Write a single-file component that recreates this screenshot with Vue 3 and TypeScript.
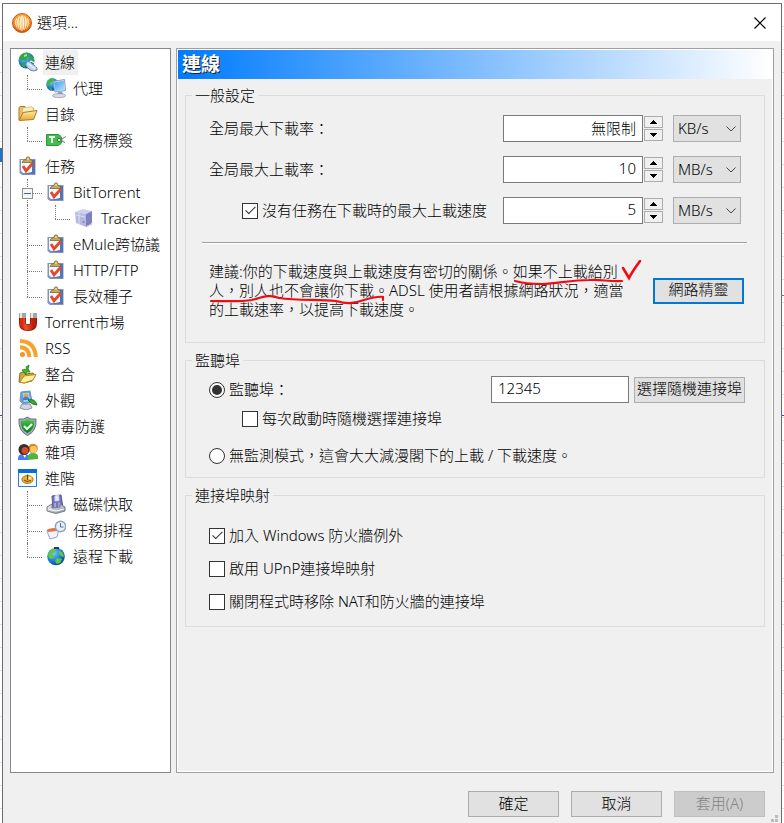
<script setup lang="ts">
import { reactive, ref } from 'vue'

type Guide = 'tee' | 'elbow' | 'pipe' | 'box'
interface TreeItem {
  label: string
  icon: string
  guides: Guide[]
}
interface Rate {
  id: string
  label: string
  value: string
  unit: string
  optional: boolean
}

const items: TreeItem[] = [
  { label: '連線', icon: 'globe-link', guides: [] },
  { label: '代理', icon: 'monitor', guides: ['elbow'] },
  { label: '目錄', icon: 'folder', guides: [] },
  { label: '任務標簽', icon: 'tag', guides: ['elbow'] },
  { label: '任務', icon: 'task', guides: [] },
  { label: 'BitTorrent', icon: 'task', guides: ['box'] },
  { label: 'Tracker', icon: 'server', guides: ['pipe', 'elbow'] },
  { label: 'eMule跨協議', icon: 'task', guides: ['tee'] },
  { label: 'HTTP/FTP', icon: 'task', guides: ['tee'] },
  { label: '長效種子', icon: 'task', guides: ['elbow'] },
  { label: 'Torrent市場', icon: 'magnet', guides: [] },
  { label: 'RSS', icon: 'rss', guides: [] },
  { label: '整合', icon: 'integrate', guides: [] },
  { label: '外觀', icon: 'look', guides: [] },
  { label: '病毒防護', icon: 'shield', guides: [] },
  { label: '雜項', icon: 'people', guides: [] },
  { label: '進階', icon: 'advanced', guides: [] },
  { label: '磁碟快取', icon: 'disk', guides: ['tee'] },
  { label: '任務排程', icon: 'schedule', guides: ['tee'] },
  { label: '遠程下載', icon: 'globe', guides: ['elbow'] },
]

const selected = ref('連線')
const rates = reactive<Rate[]>([
  { id: 'down', label: '全局最大下載率：', value: '無限制', unit: 'KB/s', optional: false },
  { id: 'up', label: '全局最大上載率：', value: '10', unit: 'MB/s', optional: false },
  { id: 'idle', label: '沒有任務在下載時的最大上載速度', value: '5', unit: 'MB/s', optional: true },
])
const limitIdle = ref(true)
const mode = ref('listen')
const port = ref('12345')
const randomEachStart = ref(false)
const mappings = reactive([
  { id: 'fw', label: '加入 Windows 防火牆例外', on: true },
  { id: 'upnp', label: '啟用 UPnP連接埠映射', on: false },
  { id: 'nat', label: '關閉程式時移除 NAT和防火牆的連接埠', on: false },
])

function step(rate: Rate, delta: number) {
  const next = (parseInt(rate.value, 10) || 0) + delta
  rate.value = next > 0 ? String(next) : '無限制'
}
function randomPort() {
  port.value = String(10000 + Math.floor(Math.random() * 50000))
}
</script>

<template>
  <div class="desk">
    <section class="window">
      <header class="titlebar">
        <svg class="logo" viewBox="0 0 20 20" aria-hidden="true"><use href="#i-logo" /></svg>
        <h1>選項...</h1>
        <button class="close" type="button" aria-label="關閉">
          <svg viewBox="0 0 12 12"><path d="M.5 .5 11.5 11.5M11.5 .5 .5 11.5" stroke="#000" stroke-width="1.2" /></svg>
        </button>
      </header>

      <div class="body">
        <nav class="tree">
          <button
            v-for="item in items"
            :key="item.label"
            type="button"
            class="node"
            :class="{ current: item.label === selected }"
            @click="selected = item.label"
          >
            <span v-for="(guide, i) in item.guides" :key="i" class="guide" :class="guide"></span>
            <svg class="icon" viewBox="0 0 20 20" aria-hidden="true"><use :href="'#i-' + item.icon" /></svg>
            <span class="name">{{ item.label }}</span>
          </button>
        </nav>

        <main class="panel">
          <h2>連線</h2>
          <div class="groups">
            <fieldset>
              <legend>一般設定</legend>
              <div class="rates">
                <div v-for="rate in rates" :key="rate.id" class="rate">
                  <label v-if="rate.optional" class="option nested">
                    <input v-model="limitIdle" type="checkbox" />{{ rate.label }}
                  </label>
                  <label v-else :for="rate.id">{{ rate.label }}</label>
                  <input :id="rate.id" v-model="rate.value" class="field number" type="text" :aria-label="rate.label" />
                  <span class="spin">
                    <button type="button" aria-label="增加" @click="step(rate, 1)">
                      <svg viewBox="0 0 7 4"><path d="M3 0h1v1h1v1h1v1h1v1H0V3h1V2h1V1h1z" /></svg>
                    </button>
                    <button type="button" aria-label="減少" @click="step(rate, -1)">
                      <svg viewBox="0 0 7 4"><path d="M0 0h7v1H6v1H5v1H4v1H3V3H2V2H1V1H0z" /></svg>
                    </button>
                  </span>
                  <span class="unit">
                    <select v-model="rate.unit" :aria-label="rate.label">
                      <option>KB/s</option>
                      <option>MB/s</option>
                    </select>
                    <svg viewBox="0 0 10 6" aria-hidden="true"><path d="M.5 .5 5 5 9.5 .5" fill="none" stroke="#444" /></svg>
                  </span>
                </div>
              </div>
              <hr />
              <div class="advice">
                <div class="note">
                  <p>
                    建議:你的下載速度與上載速度有密切的關係。如果不上載給別<br />
                    人，別人也不會讓你下載。ADSL 使用者請根據網路狀況，適當<br />
                    的上載速率，以提高下載速度。
                  </p>
                  <svg class="ink" viewBox="0 0 440 60" aria-hidden="true">
                    <path d="M306 23C316 26 324 26 333 26C350 25 364 22 380 22C392 21 400 24 413 23" />
                    <path d="M414 10L420 20Q423 14 431 3" stroke-width="2.6" />
                    <path d="M2 43C15 43 31 44 43 42C54 39 61 36 70 40C90 43 109 41 127 43C137 46 144 46 155 42C162 40 170 38 174 39V42" />
                  </svg>
                </div>
                <button class="push focused" type="button">網路精靈</button>
              </div>
            </fieldset>

            <fieldset>
              <legend>監聽埠</legend>
              <div class="listen">
                <label class="option"><input v-model="mode" type="radio" value="listen" />監聽埠：</label>
                <input v-model="port" class="field port" type="text" aria-label="監聽埠" />
                <button class="push random" type="button" @click="randomPort">選擇隨機連接埠</button>
              </div>
              <label class="option nested each"><input v-model="randomEachStart" type="checkbox" />每次啟動時隨機選擇連接埠</label>
              <label class="option passive"><input v-model="mode" type="radio" value="passive" />無監測模式，這會大大減漫閣下的上載 / 下載速度。</label>
            </fieldset>

            <fieldset>
              <legend>連接埠映射</legend>
              <div class="mappings">
                <label v-for="m in mappings" :key="m.id" class="option"><input v-model="m.on" type="checkbox" />{{ m.label }}</label>
              </div>
            </fieldset>
          </div>
        </main>
      </div>

      <footer class="actions">
        <button class="push" type="button">確定</button>
        <button class="push" type="button">取消</button>
        <button class="push" type="button" disabled>套用(A)</button>
        <svg class="grip" viewBox="0 0 8 8" aria-hidden="true"><path d="M4 0h3v3H4zM4 4h3v3H4zM0 4h3v3H0z" fill="#bcbcbc" /></svg>
      </footer>
    </section>

    <svg class="sprites" aria-hidden="true">
      <defs>
        <radialGradient id="g-orange" cx=".5" cy=".3" r=".7">
          <stop offset="0" stop-color="#ffb04a" /><stop offset=".7" stop-color="#f28a1c" /><stop offset="1" stop-color="#c9420c" />
        </radialGradient>
        <radialGradient id="g-sea" cx=".35" cy=".3" r=".8">
          <stop offset="0" stop-color="#7fd0ff" /><stop offset=".5" stop-color="#1f86dc" /><stop offset="1" stop-color="#0b3f94" />
        </radialGradient>
        <linearGradient id="g-screen" x1="0" y1="0" x2="1" y2="1">
          <stop offset="0" stop-color="#3c9bea" /><stop offset="1" stop-color="#b4e6ff" />
        </linearGradient>
        <linearGradient id="g-gold" x1="0" y1="0" x2="0" y2="1">
          <stop offset="0" stop-color="#fff0a8" /><stop offset="1" stop-color="#e5a62d" />
        </linearGradient>
        <linearGradient id="g-steel" x1="0" y1="0" x2="1" y2="1">
          <stop offset="0" stop-color="#f4f5fa" /><stop offset="1" stop-color="#8a8fa8" />
        </linearGradient>
        <linearGradient id="g-green" x1="0" y1="0" x2="0" y2="1">
          <stop offset="0" stop-color="#3fd044" /><stop offset="1" stop-color="#067712" />
        </linearGradient>
        <linearGradient id="g-red" x1="0" y1="0" x2="1" y2="0">
          <stop offset="0" stop-color="#d92d12" /><stop offset=".3" stop-color="#f1522a" /><stop offset="1" stop-color="#b81f0a" />
        </linearGradient>
      </defs>
      <symbol id="i-logo" viewBox="0 0 20 20">
        <circle cx="10" cy="10" r="9.5" fill="url(#g-orange)" stroke="#c95a22" />
        <path d="M9.5 18.5C7 14 7 8 9 2.5L9.8 2.5zM10.5 18.5C13 14 13 8 11 2.5L10.2 2.5zM8.2 18C4.2 13 4.6 7 6.6 3.6L7.8 3.2C6.2 8 6.4 13 8.2 18M11.8 18C15.8 13 15.4 7 13.4 3.6L12.2 3.2C13.8 8 13.6 13 11.8 18M6 17C2.4 12 2.6 8 4.2 5.6L5.2 4.8C3.8 9 4.2 13 6 17M14 17C17.6 12 17.4 8 15.8 5.6L14.8 4.8C16.2 9 15.8 13 14 17" fill="#fff3d5" />
      </symbol>
      <symbol id="i-globe-link" viewBox="0 0 20 20">
        <circle cx="8.5" cy="8.5" r="8" fill="url(#g-sea)" />
        <path d="M3 3Q6 0 11 1L12 4 9 6 8 9 5 8 2 9 1 6zM12 3L16 6 16 10 12 9zM4 11L7 12 7 16 4 14z" fill="#35a83a" />
        <path d="M6 3L9 2 9 4 6 5z" fill="#a6e59c" />
        <path d="M8 11Q9 8 12 10L17 14Q20 16 19 18 16 20 12 18L9 15Q7 13 8 11" fill="#bcd3ee" stroke="#6784ad" />
        <path d="M10 11.5L17 17M12 10L13 9 18 12 18 15" fill="none" stroke="#edf5ff" stroke-width="1.2" />
      </symbol>
      <symbol id="i-monitor" viewBox="0 0 20 20">
        <circle cx="6.5" cy="6.5" r="6.3" fill="url(#g-sea)" />
        <path d="M1 3L5 0 9 1 7 4 4 5 4 8 1 8zM3 9L6 11 5 13z" fill="#42b545" />
        <path d="M7 3.5L18.5 1.5 19.5 12.5 9 14z" fill="#dfe7f5" stroke="#8f9ac4" />
        <path d="M8 4.5L18 2.8 18.7 11.8 9.6 13z" fill="url(#g-screen)" />
        <path d="M12 14L16 13.5 17 16 11 17z" fill="#9a9fc0" />
        <ellipse cx="13" cy="17.7" rx="6.5" ry="2" fill="#d9dbe9" stroke="#8b8eaf" stroke-width=".7" />
      </symbol>
      <symbol id="i-folder" viewBox="0 0 20 20">
        <path d="M1 16V3.5L2.5 2.5H7L8.5 4.5H15.5V8" fill="#e9c466" stroke="#a17627" />
        <path d="M5 3.5L14 2.8 16 6V9H4z" fill="#f8edb8" stroke="#c5a45b" stroke-width=".6" />
        <path d="M1.2 16.5L5 8.5 19 6.5 15.6 15.5Z" fill="url(#g-gold)" stroke="#ac7926" />
      </symbol>
      <symbol id="i-tag" viewBox="0 0 20 20">
        <path d="M.5 4.5H12.5Q16 6 16 10T12.5 15.5H.5z" fill="#45bd4e" stroke="#2b963b" />
        <path d="M3 7H9M6 7V13" stroke="#edffed" stroke-width="2" />
        <circle cx="13" cy="10" r="1.6" fill="#fff" stroke="#237c31" />
        <path d="M14 10L20 6.5M14 10L19 12.5" fill="none" stroke="#6b8070" />
      </symbol>
      <symbol id="i-task" viewBox="0 0 20 20">
        <path d="M1.5 3H17.5V19H4L1.5 17z" fill="#8193bf" />
        <path d="M3 4H15V17H5L3 15z" fill="#f4f7ff" />
        <path d="M14 4H17V18H5L14 16z" fill="#5775ae" />
        <path d="M4 6.5Q5 3.5 8 3.5 8 .8 10 .8T12 3.5Q14 3.5 15 6.5z" fill="#c5aa56" stroke="#705c26" stroke-width=".7" />
        <circle cx="10" cy="3" r=".8" fill="#fff" />
        <path d="M5 10L8 14.8 14.5 7.5" fill="none" stroke="#e6492a" stroke-width="2.8" />
      </symbol>
      <symbol id="i-server" viewBox="0 0 20 20">
        <path d="M1 4L9 1 18 3 12 6z" fill="#cfd0ef" /><path d="M1 4L12 6V19L2 15z" fill="#b6b8de" /><path d="M12 6L18 3V15L12 19z" fill="#7d80c2" />
        <path d="M2 7L11 9M5 5V16" stroke="#dcdef6" /><circle cx="9.5" cy="14" r=".8" fill="#6066ae" />
        <path d="M13 18L18 16" stroke="#b9bacb" />
      </symbol>
      <symbol id="i-magnet" viewBox="0 0 20 20">
        <path d="M4.5 1V11Q4.5 15.5 10 15.5T15.5 11V1" fill="none" stroke="#841508" stroke-width="7" />
        <path d="M4.5 1V11Q4.5 15.5 10 15.5T15.5 11V1" fill="none" stroke="url(#g-red)" stroke-width="5.4" />
        <path d="M1 1H8V6H1zM12 1H19V6H12z" fill="#a5a5a5" /><path d="M2 1H4V6H2zM13 1H15V6H13z" fill="#e4e4e4" />
      </symbol>
      <symbol id="i-rss" viewBox="0 0 20 20">
        <circle cx="4.5" cy="16.5" r="2.5" fill="#f7941d" />
        <path d="M2 9.2Q11 9.5 11.3 19M2 3Q17 3.5 17.8 19" fill="none" stroke="#f9a22b" stroke-width="4" />
      </symbol>
      <symbol id="i-integrate" viewBox="0 0 20 20">
        <path d="M1 18L2 9 6 8 8 10 15 9 17 12 14 17 6 19z" fill="#d7a934" stroke="#8d6a1f" />
        <path d="M2 18L6 12 18 10.5 15 16 6 19z" fill="#fff09c" stroke="#b88c2b" />
        <path d="M4 6L9 5 8 3 11 1 10 5 12 8 8 8 8 11z" fill="#43bd2d" stroke="#14780e" stroke-width=".8" />
      </symbol>
      <symbol id="i-look" viewBox="0 0 20 20">
        <path d="M3 2L12 1 14 12 5 14 2 11z" fill="#6a9cd8" stroke="#7590b5" />
        <path d="M4.5 3L11 2.8 12 11 6 12z" fill="#96d9ff" /><circle cx="8" cy="6" r="2.4" fill="#e9a24c" /><path d="M5 8Q8 5 11 8V10H5z" fill="#3a83cc" />
        <path d="M4 14H12L14 18 8 20 2 18z" fill="#d2d5e0" stroke="#8b91a7" />
        <path d="M10 10Q17 8 19 15 14 15 10 10" fill="#39a936" stroke="#1b7921" />
      </symbol>
      <symbol id="i-shield" viewBox="0 0 20 20">
        <path d="M1 3L6 3 9 1 13 3 18 3Q19 15 9.5 19.5 0 15 1 3" fill="#a3a9b8" stroke="#666e80" />
        <path d="M3 5L7 5 9 3 13 5 16 5Q17 13 9.5 17 2 13 3 5" fill="url(#g-green)" />
        <path d="M6 10L9 13 14 8" fill="none" stroke="#fff" stroke-width="2" />
      </symbol>
      <symbol id="i-people" viewBox="0 0 20 20">
        <path d="M0 18Q-1 12 6 12T11 18z" fill="#4a7cf0" /><path d="M10 18Q9 11 15 11T20 17z" fill="#4bb642" />
        <circle cx="15" cy="6.5" r="4.8" fill="#d58a22" /><circle cx="15.5" cy="7.5" r="3.4" fill="#ffc862" />
        <circle cx="6" cy="7.5" r="5.5" fill="#342e31" /><circle cx="7" cy="8.5" r="3.4" fill="#d54d21" /><path d="M5 13L8 13 7 16z" fill="#fff" />
      </symbol>
      <symbol id="i-advanced" viewBox="0 0 20 20">
        <path d="M.5 1.5H18.5V18.5H.5z" fill="#f8fbff" stroke="#2680d3" /><path d="M0 1H19V5H0z" fill="#0870d5" />
        <ellipse cx="9.5" cy="11.5" rx="5.6" ry="4" fill="#e8b13c" stroke="#b47714" /><path d="M9.5 12V6.5M6 12L9 13.5 13 12.5" stroke="#684914" fill="none" /><circle cx="12" cy="10" r="1.5" fill="#fff0a5" />
      </symbol>
      <symbol id="i-disk" viewBox="0 0 20 20">
        <path d="M6 2L15 1 17 14 7 16z" fill="#7474c0" stroke="#54568c" /><path d="M9 2V7L13 6.5 12.5 1zM9 9V15M13 8.5V14" fill="#e8e8fa" stroke="#d4d5f2" />
        <path d="M1 13L6 10V14L14 13V10L19 13V17L10 19.5 1 17z" fill="url(#g-steel)" stroke="#777a86" /><path d="M2 15L10 17 18 15" stroke="#fff" fill="none" />
      </symbol>
      <symbol id="i-schedule" viewBox="0 0 20 20">
        <path d="M1 10L13 9 11 17 4 19Q2 15 1 10" fill="#eef2fb" stroke="#9aa4b8" /><path d="M1 10Q4 7.5 10 8L11 11 2 12z" fill="#e9703e" />
        <circle cx="14.5" cy="6.5" r="5.2" fill="#e6f0fb" stroke="#94a2b8" stroke-width="1.5" /><path d="M14.5 3V7H17.5" fill="none" stroke="#4970a5" />
      </symbol>
      <symbol id="i-globe" viewBox="0 0 20 20">
        <circle cx="10" cy="10.5" r="8.8" fill="url(#g-sea)" />
        <path d="M2 8L6 3 10 3 9 6 6 8 8 11 6 13 3 12zM13 4L17 7 18 11 15 10 13 8zM11 12L16 13 14 17 11 18 9 15z" fill="#65c739" /><path d="M8 1H13V3H8z" fill="#173b8d" />
      </symbol>
    </svg>
  </div>
</template>

<style>
body {
  background: #fff;
}
</style>

<style scoped>
.desk {
  box-sizing: border-box;
  min-height: 100vh;
  padding: 3px 2px 0;
  display: flex;
  background:
    linear-gradient(#1d73c9, #1d73c9) 0 148px / 2px 14px no-repeat,
    linear-gradient(#777, #777) 100% 295px / 2px 1px no-repeat,
    linear-gradient(#7a2e9e, #7a2e9e) 0 415px / 100% 1px no-repeat,
    repeating-linear-gradient(#fff 0 22px, #e1e1e1 22px 23px) 0 4px;
  color: #000;
  font: 300 15px/19px "Noto Sans", "Noto Sans CJK TC", sans-serif;
}
.window {
  box-sizing: border-box;
  flex: 1;
  min-width: 0;
  display: flex;
  flex-direction: column;
  border: 1px solid #6c6c6c;
  border-bottom: 0;
  background: #f0f0f0;
}
.sprites {
  position: absolute;
  width: 0;
  height: 0;
}
button,
input,
select {
  box-sizing: border-box;
  margin: 0;
  font: inherit;
  color: inherit;
  border-radius: 0;
}
.titlebar {
  display: flex;
  align-items: center;
  gap: 5px;
  height: 37px;
  padding: 0 15px 0 9px;
  background: #fff;
}
.titlebar h1 {
  flex: 1;
  margin: 0;
  font-size: 15px;
  font-weight: inherit;
}
.logo {
  width: 20px;
  height: 20px;
}
.close {
  padding: 0;
  border: 0;
  background: none;
  line-height: 0;
}
.close svg {
  width: 12px;
  height: 12px;
}
.body {
  flex: 1;
  display: grid;
  grid-template-columns: 161px minmax(0, 1fr);
  gap: 5px;
  padding: 7px 7px 0;
}
.tree {
  display: flex;
  flex-direction: column;
  padding-left: 7px;
  border: 1px solid #828790;
  background: #fff;
}
.node {
  display: flex;
  align-items: center;
  height: 26px;
  padding: 0;
  border: 0;
  background: none;
  text-align: left;
  white-space: nowrap;
}
.icon {
  flex: none;
  width: 20px;
  height: 20px;
}
.name {
  margin-left: 5px;
  padding: 3px 3px 3px 2px;
}
.current .name {
  background: #f0f0f0;
}
.guide {
  position: relative;
  flex: none;
  width: 28px;
  height: 26px;
}
.guide::before,
.guide::after {
  content: "";
  position: absolute;
  left: 9px;
  top: 0;
}
.tee::before,
.pipe::before,
.box::before {
  height: 26px;
  border-left: 1px dotted #777;
}
.elbow::before {
  height: 14px;
  border-left: 1px dotted #777;
}
.pipe::after {
  content: none;
}
.tee::after,
.elbow::after {
  top: 14px;
  width: 15px;
  border-top: 1px dotted #777;
}
.box {
  background: repeating-linear-gradient(90deg, #777 0 1px, #fff 1px 2px) 15px 14px / 9px 1px no-repeat;
}
.box::after {
  left: 4px;
  top: 9px;
  width: 9px;
  height: 9px;
  border: 1px solid #919191;
  background: linear-gradient(#4b63a7, #4b63a7) center / 7px 1px no-repeat, #f5f5f5;
}
.panel {
  border: 1px solid #a0a0a0;
  box-shadow: inset 0 0 0 1px #fff;
  padding: 1px;
}
.panel h2 {
  margin: 0;
  padding: 0 4px;
  background: linear-gradient(90deg, #007bff, #fff);
  color: #fff;
  font-size: 19px;
  font-weight: 700;
  line-height: 29px;
  text-shadow: 1px 1px 0 #222;
}
.groups {
  display: flex;
  flex-direction: column;
  gap: 7px;
  padding: 6px 7px;
}
fieldset {
  min-width: 0;
  margin: 0;
  padding: 0 19px 0 23px;
  border: 1px solid #dcdcdc;
}
legend {
  margin-left: -17px;
  padding: 0 3px;
  line-height: 20px;
}
.rates {
  display: flex;
  flex-direction: column;
  gap: 14px;
  padding: 10px 4px 0 0;
}
.rate {
  display: flex;
  align-items: center;
}
.rate label {
  flex: 1;
}
.field {
  height: 27px;
  border: 1px solid #7a7a7a;
  background: #fff;
  padding: 0 6px 3px;
}
.number {
  width: 140px;
  text-align: right;
}
.spin {
  display: flex;
  flex-direction: column;
  gap: 1px;
  margin: 0 10px 0 1px;
}
.spin button {
  display: flex;
  align-items: center;
  justify-content: center;
  width: 19px;
  height: 12px;
  padding: 0;
  border: 1px solid #acacac;
  background: #f0f0f0;
}
.spin svg {
  width: 7px;
  height: 4px;
}
.unit {
  position: relative;
}
.unit select {
  display: block;
  width: 68px;
  height: 27px;
  padding: 0 4px;
  border: 1px solid #adadad;
  background: #e1e1e1;
  appearance: none;
}
.unit svg {
  position: absolute;
  right: 5px;
  top: 11px;
  width: 10px;
  height: 6px;
  pointer-events: none;
}
.option {
  display: flex;
  align-items: center;
  gap: 4px;
}
.nested {
  padding-left: 33px;
}
input[type="checkbox"],
input[type="radio"] {
  appearance: none;
  display: grid;
  place-items: center;
  flex: none;
  width: 16px;
  height: 16px;
  border: 1px solid #333;
  background: #fff;
}
input[type="radio"] {
  border-radius: 50%;
}
input[type="radio"]:checked::before {
  content: "";
  width: 10px;
  height: 10px;
  border-radius: 50%;
  background: #333;
}
input[type="checkbox"]:checked::before {
  content: "";
  width: 4px;
  height: 9px;
  margin-top: -4px;
  border: solid #333;
  border-width: 0 1px 1px 0;
  transform: rotate(45deg);
}
hr {
  height: 1px;
  margin: 18px -2px 0 -7px;
  border: 0;
  border-top: 1px solid #a0a0a0;
  background: #fff;
}
.advice {
  display: flex;
  align-items: center;
  justify-content: space-between;
  padding: 18px 1px 23px 0;
}
.note {
  position: relative;
}
.note p {
  margin: 0;
  white-space: nowrap;
}
.ink {
  position: absolute;
  left: 0;
  top: -4px;
  width: 440px;
  height: 60px;
  fill: none;
  stroke: #f00d12;
  stroke-width: 2.2;
  stroke-linecap: round;
  pointer-events: none;
}
.push {
  width: 91px;
  height: 26px;
  padding: 0 0 2px;
  border: 1px solid #adadad;
  background: #e1e1e1;
  white-space: nowrap;
}
.push:disabled {
  border-color: #bfbfbf;
  background: #ccc;
  color: #838383;
}
.focused {
  border: 2px solid #0078d7;
}
.listen {
  display: flex;
  align-items: center;
  gap: 5px;
  padding-top: 6px;
}
.listen .option {
  flex: 1;
}
.port {
  width: 138px;
}
.random {
  width: 111px;
}
.each {
  padding-top: 6px;
}
.passive {
  padding: 18px 0 12px;
}
.mappings {
  display: flex;
  flex-direction: column;
  gap: 14px;
  padding: 21px 0 15px;
}
.actions {
  position: relative;
  display: flex;
  justify-content: flex-end;
  gap: 12px;
  padding: 18px 16px 6px;
}
.grip {
  position: absolute;
  right: 2px;
  bottom: 0;
  width: 8px;
  height: 8px;
}
</style>
